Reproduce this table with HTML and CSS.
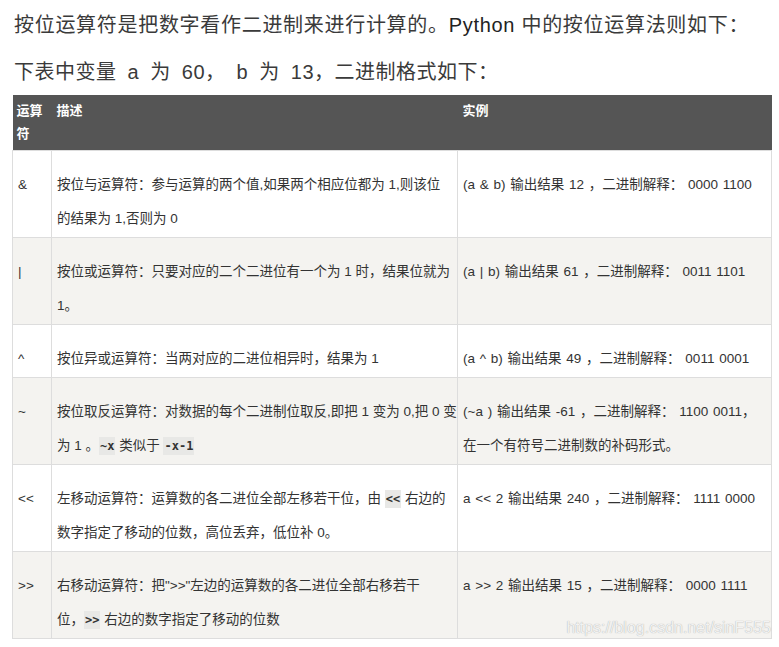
FILE: index.html
```html
<!DOCTYPE html>
<html lang="zh-CN">
<head>
<meta charset="utf-8">
<title>Python 按位运算符</title>
<link rel="stylesheet" href="styles.css">
</head>
<body>
<div class="page">
  <p class="intro">按位运算符是把数字看作二进制来进行计算的。<span class="py">Python</span> 中的按位运算法则如下：</p>
  <p class="intro second">下表中变量 a 为 60， b 为 13，二进制格式如下：</p>
  <div class="table-wrap">
    <table class="ops">
      <colgroup>
        <col class="c1">
        <col class="c2">
        <col class="c3">
      </colgroup>
      <thead>
        <tr><th>运算符</th><th>描述</th><th>实例</th></tr>
      </thead>
      <tbody>
        <tr>
          <td>&amp;</td>
          <td>按位与运算符：参与运算的两个值,如果两个相应位都为 1,则该位<br>的结果为 1,否则为 0</td>
          <td class="ex">(a &amp; b) 输出结果 12 ，二进制解释： 0000 1100</td>
        </tr>
        <tr>
          <td>|</td>
          <td>按位或运算符：只要对应的二个二进位有一个为 1 时，结果位就为<br>1。</td>
          <td class="ex">(a | b) 输出结果 61 ，二进制解释： 0011 1101</td>
        </tr>
        <tr>
          <td>^</td>
          <td>按位异或运算符：当两对应的二进位相异时，结果为 1</td>
          <td class="ex">(a ^ b) 输出结果 49 ，二进制解释： 0011 0001</td>
        </tr>
        <tr>
          <td>~</td>
          <td>按位取反运算符：对数据的每个二进制位取反,即把 1 变为 0,把 0 变<br>为 1 。<code>~x</code> 类似于 <code>-x-1</code></td>
          <td class="ex">(~a ) 输出结果 -61 ，二进制解释： 1100 0011，<br>在一个有符号二进制数的补码形式。</td>
        </tr>
        <tr>
          <td>&lt;&lt;</td>
          <td>左移动运算符：运算数的各二进位全部左移若干位，由 <code>&lt;&lt;</code> 右边的<br>数字指定了移动的位数，高位丢弃，低位补 0。</td>
          <td class="ex">a &lt;&lt; 2 输出结果 240 ，二进制解释： 1111 0000</td>
        </tr>
        <tr>
          <td>&gt;&gt;</td>
          <td>右移动运算符：把"&gt;&gt;"左边的运算数的各二进位全部右移若干<br>位，<code>&gt;&gt;</code> 右边的数字指定了移动的位数</td>
          <td class="ex">a &gt;&gt; 2 输出结果 15 ，二进制解释： 0000 1111</td>
        </tr>
      </tbody>
    </table>
    <span class="watermark">https://blog.csdn.net/sinF555</span>
  </div>
</div>
</body>
</html>
```
FILE: styles.css
```css
html, body {
  margin: 0;
  padding: 0;
  background: #ffffff;
}

.page {
  padding: 0 8px 0 12px;
  font-family: "Liberation Sans", "Noto Sans CJK SC", sans-serif;
  color: #333333;
}

.intro {
  margin: 10px 0 0 2px;
  font-size: 20px;
  line-height: 30px;
  color: #3a3a3a;
  letter-spacing: 0.7px;
  white-space: nowrap;
}

.intro.second {
  margin-top: 17px;
  margin-bottom: 8px;
  letter-spacing: 0.5px;
  word-spacing: 5px;
}

.py {
  color: #222222;
}

.table-wrap {
  position: relative;
  width: 759px;
}

.ops {
  width: 759px;
  border-collapse: collapse;
  table-layout: fixed;
  font-size: 13.5px;
  color: #333333;
}

.c1 { width: 39px; }
.c2 { width: 406px; }
.c3 { width: 314px; }

.ops th {
  background: #555555;
  color: #ffffff;
  font-weight: bold;
  font-size: 13px;
  text-align: left;
  vertical-align: top;
  padding: 4px 4px 5px 4px;
  line-height: 23px;
  height: 45px;
}

.ops th + th {
  padding-left: 5px;
}

.ops td {
  border: 1px solid #dddddd;
  padding: 17px 4px 1px 5px;
  line-height: 34px;
  vertical-align: top;
  white-space: nowrap;
}

.ops td.ex {
  word-spacing: 1px;
}

.ops tbody tr:nth-child(even) td {
  background: #f4f3f0;
}

.ops code {
  font-family: "DejaVu Sans Mono", monospace;
  font-weight: bold;
  font-size: 12px;
  background: #e8e8e6;
  padding: 2px 1px;
  color: #333333;
  word-spacing: 0;
}

.watermark {
  position: absolute;
  right: 0;
  bottom: 2px;
  font-family: "Liberation Sans", sans-serif;
  font-size: 16px;
  color: #f2f2f2;
  text-shadow: 0 0 1px #a0a0a0;
}
```
